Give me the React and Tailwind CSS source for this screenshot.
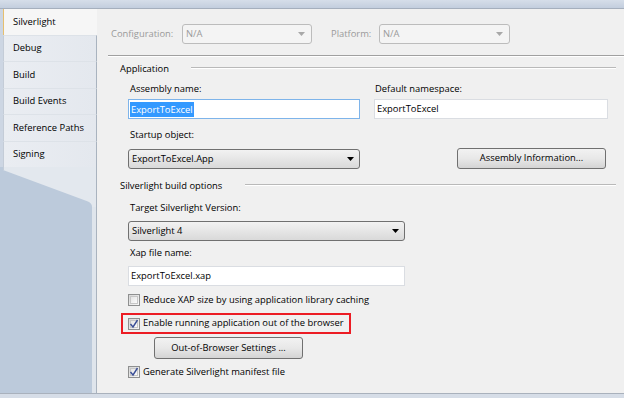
import React from "react";

function Arrow({ color = "#000" }) {
  return (
    <svg width="7" height="4" viewBox="0 0 7 4">
      <path d="M0 0H7L3.5 4Z" fill={color} />
    </svg>
  );
}

function Check({ checked }) {
  return (
    <div className="w-[12px] h-[12px] border border-[#8e8f8f] bg-linear-to-br from-[#d6d6d6] to-[#f8f8f8] flex items-center justify-center shrink-0">
      <div className="w-[8px] h-[8px] border border-[#c6c6c6] bg-linear-to-br from-[#e4e4e4] to-[#fbfbfb] flex items-center justify-center">
        {checked && (
          <svg width="10" height="10" viewBox="0 0 10 10" className="overflow-visible">
            <path d="M1.5 5 L4 8 L8.5 1" stroke="#3a4e96" strokeWidth="1.4" fill="none" />
          </svg>
        )}
      </div>
    </div>
  );
}

function Tab({ label, selected, h }) {
  if (selected) {
    return (
      <div className={`${h} flex items-center pl-[9px] bg-[#f6f6f6] border-l border-[#e6bf6e]`}>
        {label}
      </div>
    );
  }
  return (
    <div className={`${h} flex items-center pl-[9px] bg-linear-to-r from-[#eaedf2] to-[#e4e8ee] border-l border-[#c4ccd7] border-r border-r-[#a9b3bf] border-t border-t-[#dde2e8]`}>
      {label}
    </div>
  );
}

export default function App() {
  return (
    <div className="w-[624px] h-[398px] flex flex-col bg-[#c9d3e1] overflow-hidden font-['Open_Sans',sans-serif] text-[9.4px] text-[#000000]">
      <div className="h-[9px] shrink-0 bg-linear-to-b from-[#d6dee9] to-[#c3cede] border-b border-[#a5afbd]" />
      <div className="flex flex-1 min-h-0">
        {/* Left tab column */}
        <div className="w-[97px] flex flex-col bg-[#cdd6e3]">
          <div className="ml-[3px] flex flex-col">
            <Tab label="Silverlight" selected h="h-[26px]" />
            <Tab label="Debug" h="h-[26px]" />
            <Tab label="Build" h="h-[27px]" />
            <Tab label="Build Events" h="h-[26px]" />
            <Tab label="Reference Paths" h="h-[27px]" />
            <Tab label="Signing" h="h-[26px]" />
          </div>
          <svg width="97" height="40" viewBox="0 0 97 40" className="block shrink-0">
            <rect x="0" y="0" width="97" height="40" fill="#bccadb" />
            <path d="M3 0 H96 V40 H92 Q92 36 88 34.5 L3 3 Z" fill="#e3e8ee" />
            <line x1="3.5" y1="0" x2="3.5" y2="3" stroke="#c4ccd7" />
            <line x1="96.5" y1="0" x2="96.5" y2="40" stroke="#a9b3bf" />
          </svg>
          <div className="flex flex-1">
            <div className="flex-1 bg-[#bccadb]" />
            <div className="w-[5px] bg-[#dfe5ec] border-r border-[#a9b3bf]" />
          </div>
        </div>

        {/* Panel */}
        <div className="flex-1 bg-[#f0f0f0] flex flex-col">
          {/* Configuration row */}
          <div className="ml-[14px] mt-[15px] h-[20px] flex items-center text-[#9a9a9a]">
            <div className="w-[71px]">Configuration:</div>
            <div className="w-[130px] h-[20px] rounded-[3px] border border-[#bcbcbc] bg-[#f4f4f4] flex items-center justify-between pl-[3px] pr-[6px]">
              <span>N/A</span>
              <Arrow color="#a8a8a8" />
            </div>
            <div className="ml-[19px] w-[48px]">Platform:</div>
            <div className="w-[131px] h-[20px] rounded-[3px] border border-[#bcbcbc] bg-[#f4f4f4] flex items-center justify-between pl-[3px] pr-[6px]">
              <span>N/A</span>
              <Arrow color="#a8a8a8" />
            </div>
          </div>

          <div className="mt-[11px] ml-[11px] h-[2px] border-t border-[#a0a0a0] border-b border-b-[#ffffff]" />

          {/* Application header */}
          <div className="mt-[5px] ml-[23px] h-[14px] flex items-center">
            <span>Application</span>
            <div className="flex-1 ml-[22px] mr-[8px] h-[2px] border-t border-[#b9b9b9] border-b border-b-[#ffffff] -mt-[2px]" />
          </div>

          <div className="ml-[31px] mt-[6px] flex gap-[14px]">
            <div className="w-[232px] flex flex-col">
              <div className="h-[14px] pl-[2px] flex items-center">Assembly name:</div>
              <div className="mt-[3px] h-[20px] bg-white border border-[#7eb4ea] flex items-center pl-[1px]">
                <span className="bg-[#3399ff] text-white leading-[15px] px-[1px]">ExportToExcel</span>
              </div>
            </div>
            <div className="w-[234px] flex flex-col">
              <div className="h-[14px] pl-[1px] flex items-center">Default namespace:</div>
              <div className="mt-[3px] h-[20px] bg-white border border-[#dadde2] flex items-center pl-[2px]">
                ExportToExcel
              </div>
            </div>
          </div>

          <div className="ml-[31px] mt-[9px] h-[14px] pl-[2px] flex items-center">Startup object:</div>
          <div className="ml-[31px] mt-[7px] flex items-center">
            <div className="w-[232px] h-[20px] rounded-[3px] border border-[#707070] bg-linear-to-b from-[#f2f2f2] via-[#e6e6e6] to-[#d9d9d9] flex items-center justify-between pl-[3px] pr-[5px]">
              <span>ExportToExcel.App</span>
              <Arrow />
            </div>
            <div className="ml-[97px] -mt-[1px] w-[149px] h-[21px] rounded-[3px] border border-[#707070] bg-linear-to-b from-[#f2f2f2] via-[#e8e8e8] to-[#d4d4d4] flex items-center justify-center">
              Assembly Information...
            </div>
          </div>

          {/* Silverlight build options header */}
          <div className="mt-[10px] ml-[23px] h-[14px] flex items-center">
            <span>Silverlight build options</span>
            <div className="flex-1 ml-[23px] mr-[8px] h-[2px] border-t border-[#b9b9b9] border-b border-b-[#ffffff] -mt-[2px]" />
          </div>

          <div className="ml-[31px] mt-[8px] h-[14px] pl-[2px] flex items-center">Target Silverlight Version:</div>
          <div className="ml-[31px] mt-[6px] w-[277px] h-[20px] rounded-[3px] border border-[#707070] bg-linear-to-b from-[#f2f2f2] via-[#e6e6e6] to-[#d9d9d9] flex items-center justify-between pl-[3px] pr-[5px]">
            <span>Silverlight 4</span>
            <Arrow />
          </div>

          <div className="ml-[31px] mt-[5px] h-[14px] pl-[2px] flex items-center">Xap file name:</div>
          <div className="ml-[31px] mt-[6px] w-[277px] h-[20px] bg-white border border-[#dadde2] flex items-center pl-[2px]">
            ExportToExcel.xap
          </div>

          <div className="ml-[31px] mt-[7px] h-[14px] flex items-center">
            <Check />
            <span className="ml-[3px]">Reduce XAP size by using application library caching</span>
          </div>

          <div className="ml-[24px] mt-[6px] w-[230px] h-[21px] border-2 border-[#ec1c24] flex items-center pl-[5px]">
            <Check checked />
            <span className="ml-[3px]">Enable running application out of the browser</span>
          </div>

          <div className="ml-[57px] mt-[3px] w-[149px] h-[22px] rounded-[3px] border border-[#707070] bg-linear-to-b from-[#f2f2f2] via-[#e8e8e8] to-[#d4d4d4] flex items-center justify-center">
            Out-of-Browser Settings ...
          </div>

          <div className="ml-[31px] mt-[6px] h-[14px] flex items-center">
            <Check checked />
            <span className="ml-[3px]">Generate Silverlight manifest file</span>
          </div>
        </div>
      </div>
      <div className="h-[5px] shrink-0 bg-[#d6dde7] border-t border-[#a9b1bc]" />
    </div>
  );
}
